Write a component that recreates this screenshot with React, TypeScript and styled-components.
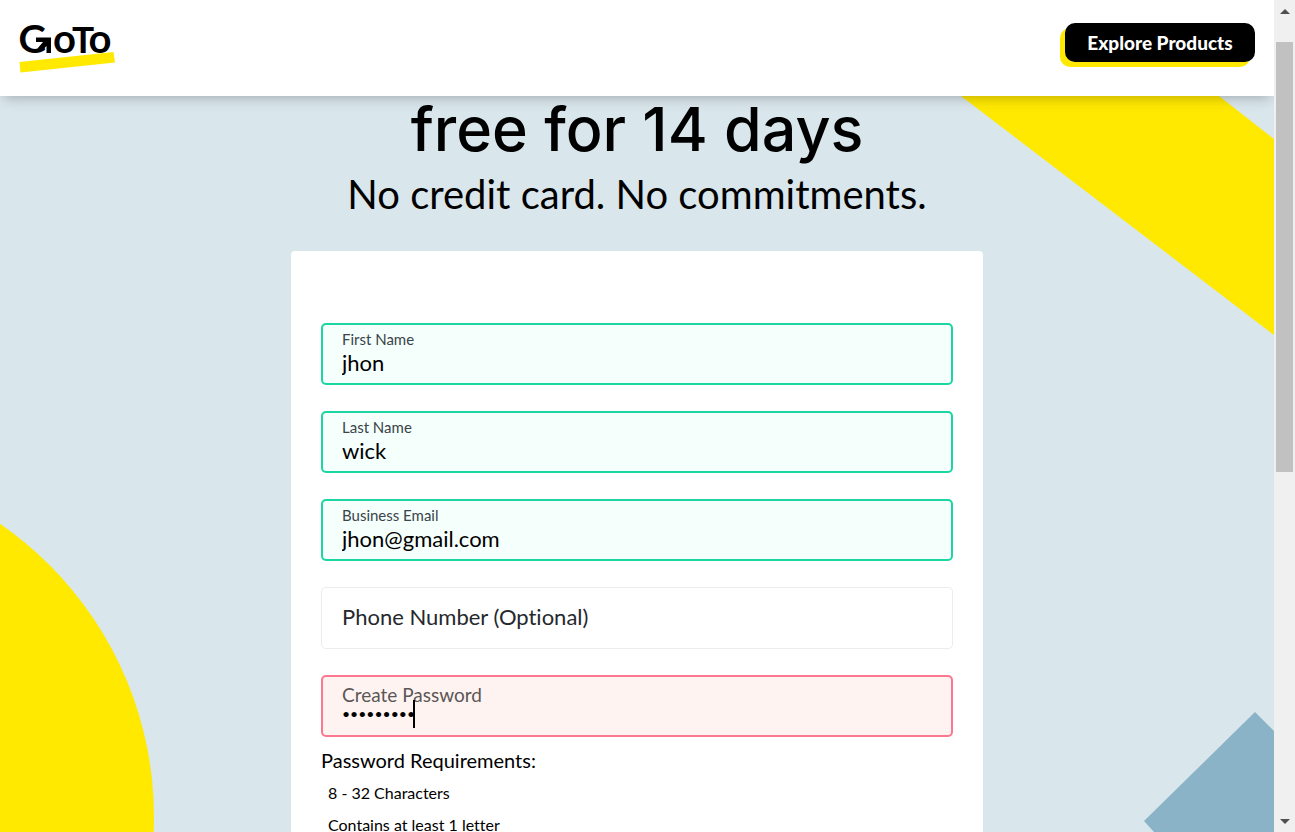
import React, { useState } from "react";
import styled, { createGlobalStyle, css } from "styled-components";

const GlobalStyle = createGlobalStyle`
  *, *::before, *::after { box-sizing: border-box; }
  body {
    margin: 0;
    font-family: Lato, "Liberation Sans", sans-serif;
    font-variant-ligatures: none;
    color: #000;
  }
`;

const yellow = "#ffe900";
const sky = "#d9e6eb";

const Shell = styled.div`
  display: flex;
  height: 100vh;
  overflow: hidden;
`;

const Page = styled.div`
  flex: 1;
  min-width: 0;
  display: flex;
  flex-direction: column;
  overflow: hidden;
  background: ${sky};
`;

const Header = styled.header`
  position: relative;
  z-index: 2;
  flex: none;
  display: flex;
  justify-content: space-between;
  align-items: flex-start;
  height: 96px;
  padding: 8px 19px 0 14px;
  background: #fff;
  box-shadow: 0 6px 12px -4px rgba(0, 0, 0, 0.25);
`;

const LogoLink = styled.a`
  display: block;
  color: #000;
  svg { display: block; }
  text {
    font-family: Lato, "Liberation Sans", sans-serif;
    font-weight: 700;
  }
`;

const ExploreButton = styled.button`
  width: 190px;
  height: 39px;
  margin-top: 15px;
  padding: 0;
  border: 0;
  border-radius: 10px;
  background: #000;
  color: #fff;
  font: 900 19px/22px Lato, "Liberation Sans", sans-serif;
  box-shadow: -5px 5px 0 ${yellow};
  cursor: pointer;
`;

const Main = styled.main`
  position: relative;
  flex: 1;
  min-height: 0;
  overflow: hidden;
`;

const Shape = styled.svg<{ $corner: "topRight" | "bottomRight" | "bottomLeft" }>`
  position: absolute;
  ${({ $corner }) =>
    $corner === "topRight"
      ? css`top: 0; right: 0;`
      : $corner === "bottomRight"
      ? css`bottom: 0; right: 0;`
      : css`bottom: 0; left: 0;`}
`;

const Content = styled.div`
  position: relative;
  display: flex;
  flex-direction: column;
  align-items: center;
`;

const Title = styled.h1`
  margin: 0 0 6px;
  font: 500 61px/66px Inter, "Liberation Sans", sans-serif;
`;

const Subtitle = styled.p`
  margin: 0 0 31px;
  font-size: 40px;
  font-weight: 400;
  line-height: 52px;
`;

const Card = styled.form`
  width: 100%;
  max-width: 692px;
  padding: 72px 30px 30px;
  border-radius: 4px;
  background: #fff;
`;

const Fields = styled.div`
  display: flex;
  flex-direction: column;
  gap: 26px;
`;

type Status = "valid" | "idle" | "error";

const Field = styled.div<{ $status: Status }>`
  position: relative;
  display: flex;
  flex-direction: column;
  justify-content: center;
  height: 62px;
  padding: 0 21px 4px;
  border-radius: 5px;
  ${({ $status }) =>
    $status === "valid"
      ? css`box-shadow: inset 0 0 0 2px #1bd6a2; background: #f5fffc;`
      : $status === "error"
      ? css`box-shadow: inset 0 0 0 2px #fc7890; background: #fff3f1;`
      : css`box-shadow: inset 0 0 0 1px #ececec; background: #fff;`}
`;

const FieldLabel = styled.label<{ $large?: boolean }>`
  font-size: ${({ $large }) => ($large ? 19 : 15)}px;
  line-height: 20px;
  color: ${({ $large }) => ($large ? "#5b5756" : "#3a444a")};
`;

const FieldInput = styled.input<{ $masked?: boolean }>`
  width: 100%;
  height: ${({ $masked }) => ($masked ? 18 : 26)}px;
  padding: 0;
  border: 0;
  outline: 0;
  background: transparent;
  color: #000;
  font: 400 ${({ $masked }) => ($masked ? 14 : 22)}px/20px Lato, "Liberation Sans", sans-serif;
  font-variant-ligatures: none;
  &::placeholder { color: #25282c; opacity: 1; }
`;

const Caret = styled.span`
  position: absolute;
  left: 92px;
  top: 25px;
  width: 2px;
  height: 28px;
  background: #000;
`;

const RequirementsTitle = styled.h2`
  margin: 11px 0 5px;
  font-size: 20px;
  font-weight: 400;
  line-height: 24px;
`;

const Requirements = styled.ul`
  margin: 0;
  padding: 0 0 0 7px;
  list-style: none;
  font-size: 16px;
  line-height: 32px;
`;

const Scrollbar = styled.div`
  flex: none;
  display: flex;
  flex-direction: column;
  align-items: center;
  width: 21px;
  background: #f0f0f0;
`;

const ArrowBox = styled.div`
  display: grid;
  place-items: center;
  width: 100%;
  height: 22px;
`;

const Track = styled.div`
  flex: 1;
  width: 17px;
  padding-top: 20px;
`;

const Thumb = styled.div`
  height: 56%;
  background: #c1c1c1;
`;

type FieldData = {
  id: string;
  label: string;
  type: string;
  status: Status;
  initial: string;
};

const fields: FieldData[] = [
  { id: "first", label: "First Name", type: "text", status: "valid", initial: "jhon" },
  { id: "last", label: "Last Name", type: "text", status: "valid", initial: "wick" },
  { id: "email", label: "Business Email", type: "email", status: "valid", initial: "jhon@gmail.com" },
  { id: "phone", label: "Phone Number (Optional)", type: "tel", status: "idle", initial: "" },
  { id: "password", label: "Create Password", type: "password", status: "error", initial: "password1" },
];

function FormField({ data }: { data: FieldData }) {
  const [value, setValue] = useState(data.initial);
  const isPassword = data.type === "password";
  const floating = data.initial !== "";
  return (
    <Field $status={data.status}>
      {floating && (
        <FieldLabel htmlFor={data.id} $large={isPassword}>
          {data.label}
        </FieldLabel>
      )}
      <FieldInput
        id={data.id}
        type={data.type}
        value={value}
        $masked={isPassword}
        placeholder={floating ? undefined : data.label}
        aria-label={floating ? undefined : data.label}
        onChange={(e) => setValue(e.target.value)}
      />
      {isPassword && <Caret />}
    </Field>
  );
}

function Logo() {
  return (
    <svg width="106" height="66" viewBox="14 8 106 66" role="img" aria-label="GoTo">
      <polygon points="19.5,62 113.5,52 115,62.5 20.5,72.5" fill={yellow} />
      <text x="18.5" y="53" fontSize="39">G</text>
      <text y="52.5" fontSize="40">
        <tspan x="53">o</tspan>
        <tspan x="72" fontSize="37">T</tspan>
        <tspan x="88.5">o</tspan>
      </text>
      {/* arrow that forms the crossbar of the G */}
      <rect x="34" y="35.5" width="18" height="12" fill="#fff" />
      <polygon points="36,37.5 51,37.5 51,53 46.5,53 46.5,46 41,51.5 37.5,48.5 43,42 36,42" />
    </svg>
  );
}

export default function App() {
  return (
    <Shell>
      <GlobalStyle />
      <Page>
        <Header>
          <LogoLink href="#">
            <Logo />
          </LogoLink>
          <ExploreButton type="button">Explore Products</ExploreButton>
        </Header>
        <Main>
          <Shape $corner="topRight" width="313" height="240" aria-hidden="true">
            <polygon points="0,0 258,0 313,43 313,239" fill={yellow} />
          </Shape>
          <Shape $corner="bottomLeft" width="160" height="320" aria-hidden="true">
            <circle cx="-202" cy="305" r="356" fill={yellow} />
          </Shape>
          <Shape $corner="bottomRight" width="130" height="120" aria-hidden="true">
            <polygon points="111,0 130,19 130,120 10,120 0,109" fill="#8bb3c8" />
          </Shape>
          <Content>
            <Title>free for 14 days</Title>
            <Subtitle>No credit card. No commitments.</Subtitle>
            <Card>
              <Fields>
                {fields.map((f) => (
                  <FormField key={f.id} data={f} />
                ))}
              </Fields>
              <RequirementsTitle>Password Requirements:</RequirementsTitle>
              <Requirements>
                <li>8 - 32 Characters</li>
                <li>Contains at least 1 letter</li>
              </Requirements>
            </Card>
          </Content>
        </Main>
      </Page>
      <Scrollbar aria-hidden="true">
        <ArrowBox>
          <svg width="10" height="5"><polygon points="0,5 5,0 10,5" fill="#505050" /></svg>
        </ArrowBox>
        <Track>
          <Thumb />
        </Track>
        <ArrowBox>
          <svg width="10" height="5"><polygon points="0,0 5,5 10,0" fill="#505050" /></svg>
        </ArrowBox>
      </Scrollbar>
    </Shell>
  );
}
